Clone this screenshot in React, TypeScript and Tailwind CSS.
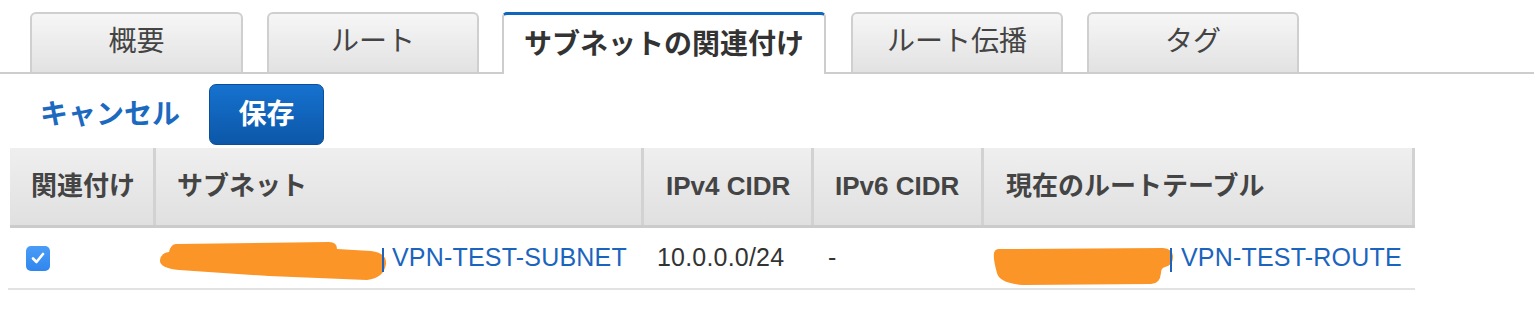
const font = { fontFamily: '"Liberation Sans", "Noto Sans CJK JP", sans-serif' }

const tabs = [
  { label: '概要', cls: 'w-[213px]' },
  { label: 'ルート', cls: 'w-[212px] ml-[24px]' },
  { label: 'サブネットの関連付け', cls: 'w-[324px] ml-[23px]', active: true },
  { label: 'ルート伝播', cls: 'w-[212px] ml-[25px]' },
  { label: 'タグ', cls: 'w-[212px] ml-[24px]' },
]

function SubnetScribble() {
  return (
    <svg width="228" height="44" viewBox="0 0 228 44" className="shrink-0">
      <path
        d="M17 5 L170 3 Q178 3 178 10 L212 12 Q228 14 227 25 Q225 39 208 41 L110 37 L20 31 Q0 29 1 21 Q2 14 10 13 Q12 5 17 5 Z"
        fill="#fb9528"
      />
    </svg>
  )
}

function RouteScribble() {
  return (
    <svg width="180" height="40" viewBox="0 0 180 40" className="shrink-0">
      <path
        d="M6 3 L170 2 Q180 3 180 11 Q180 19 172 21 Q168 22 168 27 Q167 38 158 38 L30 39 Q6 37 4 27 Q0 13 1 7 Q2 3 6 3 Z"
        fill="#fb9528"
      />
    </svg>
  )
}

export default function App() {
  return (
    <div className="w-[1534px] h-[310px] bg-white text-[#333]" style={font}>
      {/* tabs */}
      <div className="flex items-end pl-[30px] pt-[12px] border-b-2 border-[#cdcdcd]">
        {tabs.map((t) =>
          t.active ? (
            <div
              key={t.label}
              className={
                'h-[62px] -mb-[2px] bg-white border-2 border-b-0 border-[#cdcdcd] border-t-[3px] border-t-[#1166bb] rounded-t-[5px] flex items-center justify-center text-[28px] font-bold text-[#333] ' +
                t.cls
              }
            >
              {t.label}
            </div>
          ) : (
            <div
              key={t.label}
              className={
                'h-[60px] bg-gradient-to-b from-[#f6f6f6] to-[#e2e2e2] border-2 border-b-0 border-[#cfcfcf] rounded-t-[6px] flex items-center justify-center text-[28px] text-[#444] pb-[2px] ' +
                t.cls
              }
            >
              {t.label}
            </div>
          )
        )}
      </div>

      {/* actions */}
      <div className="flex items-center pl-[40px] pt-[10px] mb-[3px]">
        <span className="text-[28px] font-bold text-[#1b6abf]">キャンセル</span>
        <button className="ml-[29px] w-[115px] h-[61px] rounded-[7px] bg-gradient-to-b from-[#1672cf] to-[#0c57a8] border border-[#0b4f9a] text-white text-[28px] font-bold">
          保存
        </button>
      </div>

      {/* table */}
      <div className="ml-[10px] w-[1405px]">
        <div className="grid grid-cols-[146px_488px_170px_170px_431px] h-[80px] bg-gradient-to-b from-[#efefef] to-[#e0e0e0] border-b-[3px] border-[#cbcbcb] text-[26px] font-bold text-[#444]">
          <div className="flex items-center pl-[21px] border-r-[3px] border-[#d2d2d2]">関連付け</div>
          <div className="flex items-center pl-[21px] border-r-[3px] border-[#d2d2d2]">サブネット</div>
          <div className="flex items-center pl-[22px] border-r-[3px] border-[#d2d2d2]">IPv4 CIDR</div>
          <div className="flex items-center pl-[21px] border-r-[3px] border-[#d2d2d2]">IPv6 CIDR</div>
          <div className="flex items-center pl-[22px] border-r-[3px] border-[#d2d2d2]">現在のルートテーブル</div>
        </div>
        <div className="grid grid-cols-[146px_488px_170px_170px_431px] h-[62px] border-b-2 border-[#e2e2e2] -ml-[2px] pl-[2px] text-[25px] tracking-[0.2px]">
          <div className="flex items-center pl-[16px]">
            <span className="w-[24px] h-[25px] rounded-[5px] bg-gradient-to-b from-[#4a9cf6] to-[#2f86ee] flex items-center justify-center">
              <svg width="16" height="16" viewBox="0 0 16 16">
                <path d="M3 8.5 L6.5 12 L13 4" stroke="white" strokeWidth="2.6" fill="none" strokeLinecap="round" strokeLinejoin="round" />
              </svg>
            </span>
          </div>
          <div className="flex items-center">
            <div className="ml-[3px] mt-[6px]">
              <SubnetScribble />
            </div>
            <span className="-ml-[5px] w-[2px] h-[24px] bg-[#1b64be] mt-[4px]" />
            <span className="ml-[8px] text-[#1b64be]">VPN-TEST-SUBNET</span>
          </div>
          <div className="flex items-center pl-[13px] text-[#333]">10.0.0.0/24</div>
          <div className="flex items-center pl-[14px] text-[#333]">-</div>
          <div className="flex items-center">
            <div className="ml-[9px] mt-[16px]">
              <RouteScribble />
            </div>
            <span className="-ml-[3px] w-[2px] h-[24px] bg-[#1b64be] mt-[4px]" />
            <span className="ml-[9px] text-[#1b64be]">VPN-TEST-ROUTE</span>
          </div>
        </div>
      </div>
    </div>
  )
}
